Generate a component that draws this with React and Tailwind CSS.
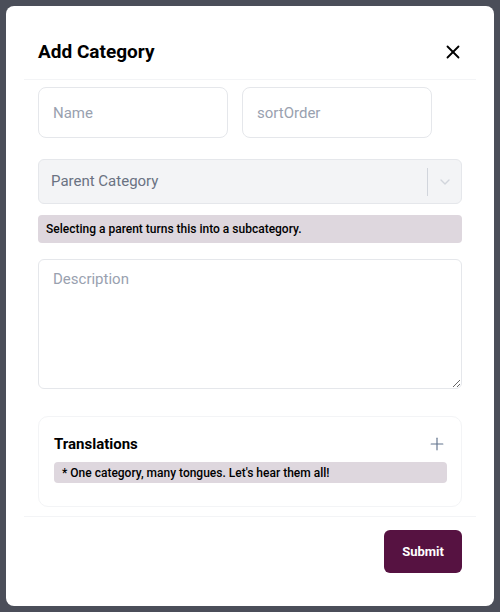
import React from 'react';
import { X, Plus, ChevronDown } from 'lucide-react';

const AddCategoryModal = () => {
  return (
    <div className="bg-white rounded-lg w-full h-full flex flex-col">
      {/* Header */}
      <div className="mx-[18px] pl-[14px] pr-[12px] pt-[32px] pb-[13px] flex items-center justify-between border-b border-gray-100">
        <h2 className="text-[19px] font-bold text-black leading-[28px]">Add Category</h2>
        <button className="text-black">
          <X className="w-[22px] h-[22px]" strokeWidth={2} />
        </button>
      </div>

      {/* Body */}
      <div className="px-[32px] pt-[7px] flex flex-col">
        <div className="flex gap-[14px]">
          <input
            placeholder="Name"
            className="w-[190px] h-[51px] px-[14px] rounded-lg border border-gray-200 text-[15px] placeholder:text-gray-400 outline-none"
          />
          <input
            placeholder="sortOrder"
            className="w-[190px] h-[51px] px-[14px] rounded-lg border border-gray-200 text-[15px] placeholder:text-gray-400 outline-none"
          />
        </div>

        <div className="mt-[21px] h-[45px] rounded-md border border-gray-200 bg-gray-100 flex items-center">
          <span className="flex-1 pl-[12px] text-[15px] text-gray-500">Parent Category</span>
          <span className="w-px h-[28px] bg-gray-300" />
          <span className="w-[33px] flex justify-center text-gray-300">
            <ChevronDown className="w-[16px] h-[16px]" strokeWidth={2} />
          </span>
        </div>

        <div className="mt-[11px] h-[28px] rounded bg-[#ded7de] flex items-center px-[8px] text-[12px] font-medium text-black">
          Selecting a parent turns this into a subcategory.
        </div>

        <textarea
          placeholder="Description"
          className="mt-[16px] h-[130px] px-[14px] py-[8px] rounded-md border border-gray-200 text-[15px] placeholder:text-gray-400 outline-none resize-y"
        />

        <div className="mt-[27px] h-[91px] rounded-[10px] border border-gray-100 pl-[15px] pr-[14px] pt-[15px]">
          <div className="flex items-center justify-between h-[24px]">
            <h3 className="text-[15px] font-bold text-black">Translations</h3>
            <Plus className="w-[20px] h-[20px] text-slate-500" strokeWidth={1.4} />
          </div>
          <div className="mt-[6px] h-[21px] rounded bg-[#ded7de] flex items-center px-[8px] text-[12px] font-medium text-black">
            * One category, many tongues. Let's hear them all!
          </div>
        </div>
      </div>

      {/* Footer */}
      <div className="mx-[18px] mt-[9px] border-t border-gray-100 pt-[13px] pr-[14px] flex justify-end">
        <button className="w-[78px] h-[43px] rounded-md bg-[#561241] text-white text-[13px] font-bold">
          Submit
        </button>
      </div>
    </div>
  );
};

export default function App() {
  return (
    <div
      className="w-[500px] h-[612px] bg-[#4b4e59] p-[6px]"
      style={{ fontFamily: 'Roboto, "Noto Sans", sans-serif' }}
    >
      <AddCategoryModal />
    </div>
  );
}
